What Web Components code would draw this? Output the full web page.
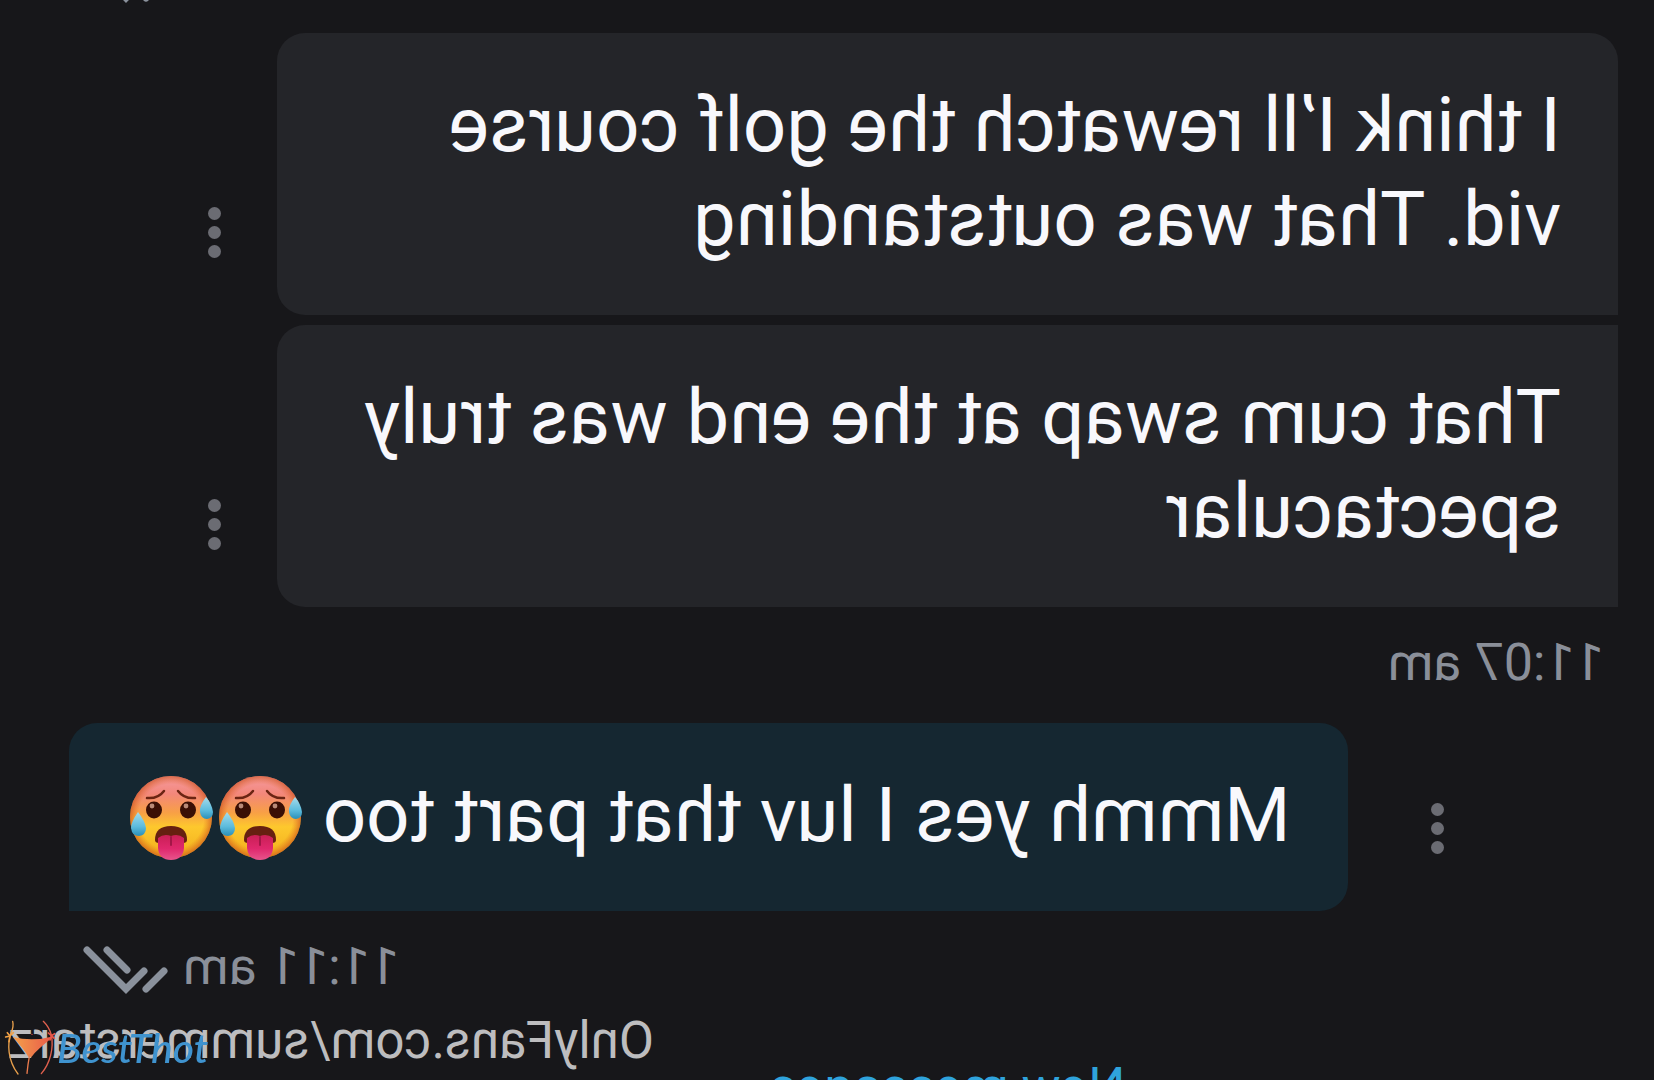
<!DOCTYPE html>
<html lang="en">
<head>
<meta charset="utf-8">
<meta name="viewport" content="width=device-width, initial-scale=1">
<title>Messages</title>
<style>
  body {
    margin: 0;
    background: #17171a;
    font-family: Roboto, "Liberation Sans", sans-serif;
  }
</style>
</head>
<body>
<chat-feed>
  <chat-receipt></chat-receipt>
  <chat-message class="first">I think I’ll rewatch the golf course vid. That was outstanding</chat-message>
  <chat-message class="last">That cum swap at the end was truly spectacular</chat-message>
  <chat-time>11:07 am</chat-time>
  <chat-message outgoing>Mmmh yes I luv that part too <hot-face></hot-face><hot-face></hot-face></chat-message>
  <chat-time outgoing>11:11 am<chat-checks></chat-checks></chat-time>
  <chat-divider>New messages</chat-divider>
  <profile-mark slot="overlay">OnlyFans.com/summerstarz</profile-mark>
</chat-feed>
<site-logo></site-logo>

<script>
/* Attach an open shadow root filled with the given markup */
function render(host, html) {
  host.attachShadow({ mode: 'open' }).innerHTML = html;
}

/* The whole conversation is flipped, the site logo is not */
customElements.define('chat-feed', class extends HTMLElement {
  constructor() {
    super();
    render(this, `
      <style>
        :host {
          position: relative;
          display: block;
          height: 100vh;
          overflow: hidden;
          transform: scaleX(-1);
        }
        main {
          display: flex;
          flex-direction: column;
        }
      </style>
      <main><slot></slot></main>
      <slot name="overlay"></slot>
    `);
  }
});

customElements.define('chat-message', class extends HTMLElement {
  constructor() {
    super();
    render(this, `
      <style>
        :host {
          display: flex;
          align-items: flex-end;
          padding: 0 153px 0 36px;
          margin-bottom: 10px;
        }
        :host(.last) {
          margin-bottom: 0;
        }
        p {
          flex: 1;
          margin: 0;
          padding: 45px 57px 49px;
          border-radius: 0 28px 28px 0;
          background: #242529;
          color: #f8f8fc;
          font-size: 76px;
          line-height: 94px;
        }
        :host(.first) p {
          border-top-left-radius: 28px;
        }
        button {
          flex: none;
          display: grid;
          justify-items: center;
          gap: 6px;
          width: 124px;
          margin: 0;
          padding: 0 0 57px;
          border: 0;
          background: none;
        }
        i {
          width: 13px;
          height: 13px;
          border-radius: 50%;
          background: #6b6c73;
        }
        :host([outgoing]) {
          flex-direction: row-reverse;
          padding: 0 69px 0 0;
          margin: 29px 0 0;
        }
        :host([outgoing]) p {
          flex: none;
          border-radius: 28px 28px 0 28px;
          background: #152731;
        }
        :host([outgoing]) button {
          margin-right: 28px;
        }
      </style>
      <p><slot></slot></p>
      <button type="button" aria-label="Message options"><i></i><i></i><i></i></button>
    `);
  }
});

customElements.define('chat-time', class extends HTMLElement {
  constructor() {
    super();
    render(this, `
      <style>
        :host {
          display: flex;
          align-items: flex-end;
          gap: 15px;
          padding: 25px 83px 0 50px;
          color: #8a8f99;
          font-size: 52px;
          line-height: 62px;
        }
        :host([outgoing]) {
          justify-content: flex-end;
        }
      </style>
      <slot></slot>
    `);
  }
});

customElements.define('chat-checks', class extends HTMLElement {
  constructor() {
    super();
    render(this, `
      <style>
        :host { display: block; padding-bottom: 4px; color: #8a919c; }
        svg { display: block; }
      </style>
      <svg width="85" height="48" viewBox="0 0 85 48" fill="none" stroke="currentColor" stroke-width="7" stroke-linecap="round" aria-hidden="true">
        <path d="M24 25 L42 43 L81 4"/>
        <path d="M4 25 L22 43"/>
        <path d="M41 24 L61 4"/>
      </svg>
    `);
  }
});

/* Receipt of the message above, scrolled almost out of view */
customElements.define('chat-receipt', class extends HTMLElement {
  constructor() {
    super();
    render(this, `
      <style>
        :host {
          display: flex;
          justify-content: flex-end;
          margin-top: -45px;
          padding: 0 83px 26px;
        }
      </style>
      <chat-checks></chat-checks>
    `);
  }
});

customElements.define('chat-divider', class extends HTMLElement {
  constructor() {
    super();
    render(this, `
      <style>
        :host {
          display: block;
          padding: 58px 277px 0 36px;
          color: #2fa3dc;
          font-size: 52px;
          line-height: 62px;
          text-align: center;
        }
      </style>
      <slot></slot>
    `);
  }
});

customElements.define('profile-mark', class extends HTMLElement {
  constructor() {
    super();
    render(this, `
      <style>
        :host {
          position: absolute;
          right: 8px;
          bottom: 9px;
          color: #bdbdbf;
          font-size: 51px;
          line-height: 60px;
          white-space: nowrap;
        }
      </style>
      <slot></slot>
    `);
  }
});

customElements.define('hot-face', class extends HTMLElement {
  constructor() {
    super();
    render(this, `
      <style>
        :host { display: inline-block; width: 89px; height: 88px; vertical-align: -21px; }
        svg { display: block; }
      </style>
      <svg width="88" height="88" viewBox="0 0 88 88" role="img" aria-label="Hot face">
        <defs>
          <linearGradient id="skin" x1="0" y1="0" x2="0" y2="1">
            <stop offset="0" stop-color="#f59aa0"/>
            <stop offset="0.22" stop-color="#f3877a"/>
            <stop offset="0.45" stop-color="#f8a045"/>
            <stop offset="0.62" stop-color="#fdc82d"/>
            <stop offset="1" stop-color="#f2ae1c"/>
          </linearGradient>
          <radialGradient id="rim" cx="0.5" cy="0.5" r="0.5">
            <stop offset="0.8" stop-color="#e0661c" stop-opacity="0"/>
            <stop offset="1" stop-color="#c9501c" stop-opacity="0.65"/>
          </radialGradient>
          <linearGradient id="drop" x1="0" y1="0" x2="0" y2="1">
            <stop offset="0" stop-color="#a6dcec"/>
            <stop offset="0.6" stop-color="#5dbcdd"/>
            <stop offset="1" stop-color="#2a8fb8"/>
          </linearGradient>
          <linearGradient id="tongue" x1="0" y1="0" x2="0" y2="1">
            <stop offset="0" stop-color="#c91f55"/>
            <stop offset="0.55" stop-color="#e0286d"/>
            <stop offset="1" stop-color="#e8558c"/>
          </linearGradient>
        </defs>
        <circle cx="44" cy="43" r="41" fill="url(#skin)"/>
        <circle cx="44" cy="43" r="41" fill="url(#rim)"/>
        <g fill="none" stroke="#6b2413" stroke-width="2.5" stroke-linecap="round">
          <path d="M20 24 Q31 25 37 17"/>
          <path d="M68 24 Q57 25 51 17"/>
        </g>
        <ellipse cx="27" cy="36" rx="8" ry="8.5" fill="#3a0f05"/>
        <ellipse cx="61" cy="36" rx="8" ry="8.5" fill="#3a0f05"/>
        <circle cx="29" cy="32" r="2.4" fill="#b98a78"/>
        <circle cx="63" cy="32" r="2.4" fill="#b98a78"/>
        <path d="M28 66 Q28 52 44 52 Q60 52 60 66 Q60 69 56 69 H32 Q28 69 28 66Z" fill="#662010"/>
        <path d="M31 64 Q37 59 44 62 Q51 59 57 64 V74 Q56 86 44 86 Q32 86 31 74Z" fill="url(#tongue)"/>
        <path d="M44 63 V71" stroke="#a31647" stroke-width="2" stroke-linecap="round"/>
        <path d="M77 38 Q84 48 84 54 Q83 62 76 62 Q69 61 69 54 Q70 47 77 38Z" fill="url(#drop)"/>
        <path d="M9 23 Q16 32 15 38 Q14 45 8 45 Q2 44 2 38 Q3 30 9 23Z" fill="url(#drop)"/>
      </svg>
    `);
  }
});

customElements.define('site-logo', class extends HTMLElement {
  constructor() {
    super();
    render(this, `
      <style>
        :host {
          position: fixed;
          left: 4px;
          bottom: 4px;
          display: flex;
          align-items: center;
          color: #3f93cf;
          font: italic 500 41px/56px Lato, sans-serif;
        }
        svg { display: block; }
      </style>
      <svg width="53" height="56" viewBox="12 300 159 168" fill="none" stroke-linecap="round" aria-hidden="true">
        <defs>
          <linearGradient id="body" x1="0" y1="0" x2="1" y2="0">
            <stop offset="0" stop-color="#f3a04a"/>
            <stop offset="1" stop-color="#e8564a"/>
          </linearGradient>
        </defs>
        <path d="M38 304 Q42 320 33 338 C22 370 22 420 54 462" stroke="#e9a04c" stroke-width="4"/>
        <path d="M130 304 Q148 322 154 345 C162 385 150 430 124 461" stroke="#e0604e" stroke-width="4"/>
        <path d="M38 351 Q98 366 162 349 Q112 388 95 410 H85 Q70 385 38 351Z" fill="url(#body)"/>
        <path d="M89 404 Q84 430 81 460" stroke="#ea7a4c" stroke-width="4"/>
        <path d="M30 348 L17 351 M30 348 L22 338 M30 348 L40 338 M30 349 L27 365" stroke="#f0a045" stroke-width="5"/>
        <path d="M154 347 L164 341 M154 347 L145 339 M154 347 L163 355 M154 347 L150 360" stroke="#e8564a" stroke-width="5"/>
        <circle cx="96" cy="343" r="2" fill="#e8564a"/>
      </svg>
      <span>BestThot</span>
    `);
  }
});
</script>
</body>
</html>
